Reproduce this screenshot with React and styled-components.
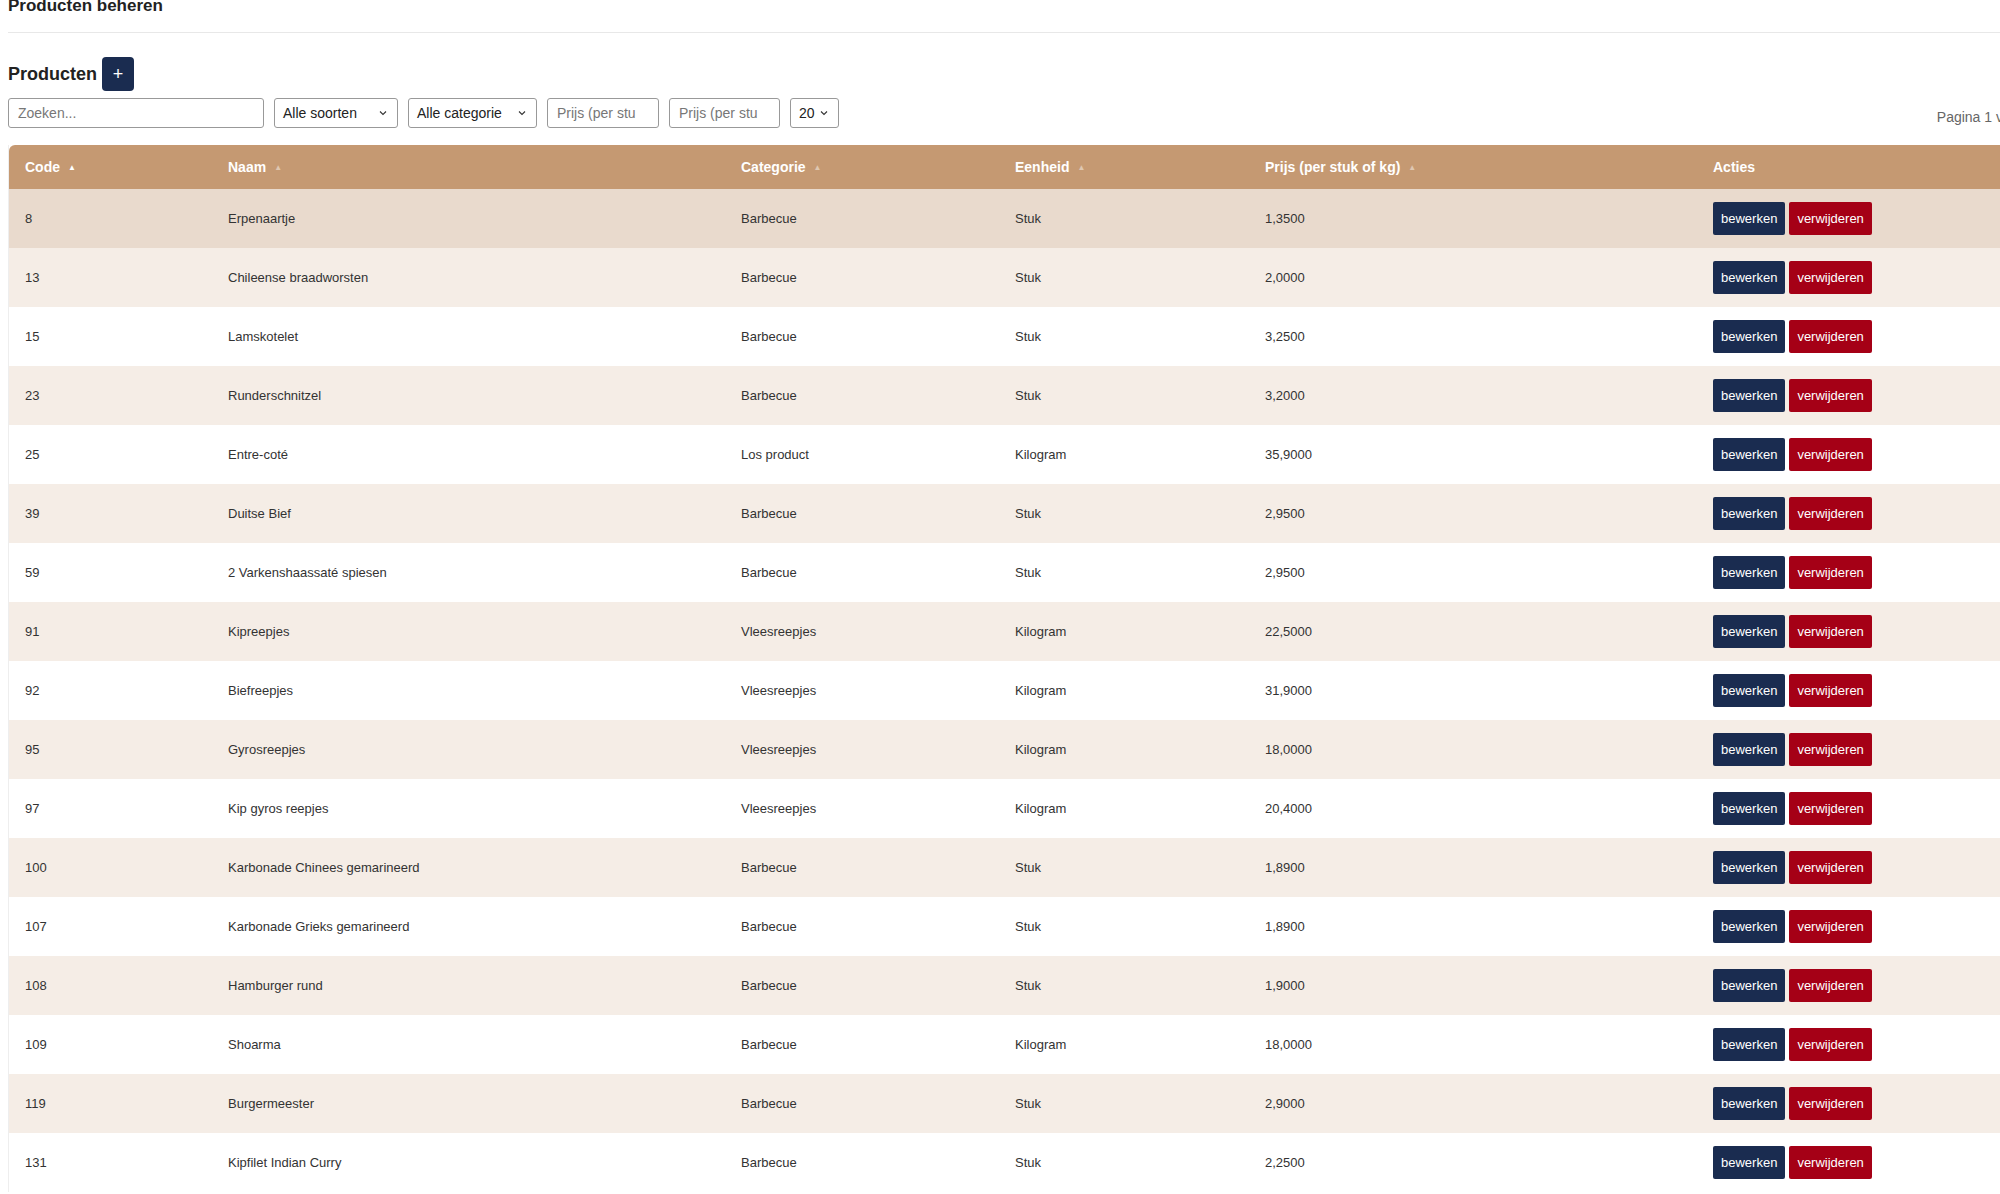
import styled, { createGlobalStyle } from "styled-components";

const GlobalStyle = createGlobalStyle`
  body {
    margin: 0;
    font-family: "Liberation Sans", Arial, sans-serif;
    color: #333;
    background: #fff;
    overflow: hidden;
  }
`;

const rows = [
  ["8", "Erpenaartje", "Barbecue", "Stuk", "1,3500"],
  ["13", "Chileense braadworsten", "Barbecue", "Stuk", "2,0000"],
  ["15", "Lamskotelet", "Barbecue", "Stuk", "3,2500"],
  ["23", "Runderschnitzel", "Barbecue", "Stuk", "3,2000"],
  ["25", "Entre-coté", "Los product", "Kilogram", "35,9000"],
  ["39", "Duitse Bief", "Barbecue", "Stuk", "2,9500"],
  ["59", "2 Varkenshaassaté spiesen", "Barbecue", "Stuk", "2,9500"],
  ["91", "Kipreepjes", "Vleesreepjes", "Kilogram", "22,5000"],
  ["92", "Biefreepjes", "Vleesreepjes", "Kilogram", "31,9000"],
  ["95", "Gyrosreepjes", "Vleesreepjes", "Kilogram", "18,0000"],
  ["97", "Kip gyros reepjes", "Vleesreepjes", "Kilogram", "20,4000"],
  ["100", "Karbonade Chinees gemarineerd", "Barbecue", "Stuk", "1,8900"],
  ["107", "Karbonade Grieks gemarineerd", "Barbecue", "Stuk", "1,8900"],
  ["108", "Hamburger rund", "Barbecue", "Stuk", "1,9000"],
  ["109", "Shoarma", "Barbecue", "Kilogram", "18,0000"],
  ["119", "Burgermeester", "Barbecue", "Stuk", "2,9000"],
  ["131", "Kipfilet Indian Curry", "Barbecue", "Stuk", "2,2500"],
];

const cols = "203px 513px 274px 250px 448px 420px";

const Page = styled.div`
  width: 2120px;
  padding: 0 0 0 8px;
`;

const Title = styled.h1`
  margin: -4px 0 0;
  font-size: 17px;
  font-weight: bold;
  color: #222;
  padding-bottom: 16px;
  border-bottom: 1px solid #e8e8e8;
`;

const HeadingRow = styled.div`
  display: flex;
  align-items: center;
  gap: 5px;
  margin-top: 24px;
`;

const Heading = styled.h2`
  margin: 0;
  font-size: 18px;
  font-weight: bold;
  color: #222;
`;

const PlusButton = styled.button`
  width: 32px;
  height: 34px;
  border: none;
  border-radius: 4px;
  background: #1a2c50;
  color: #fff;
  font-size: 18px;
  font-family: inherit;
`;

const Filters = styled.div`
  display: flex;
  align-items: center;
  gap: 10px;
  margin-top: 7px;
  height: 30px;
`;

const Input = styled.input`
  box-sizing: border-box;
  width: ${(p) => p.$w}px;
  height: 30px;
  border: 1px solid #999;
  border-radius: 3px;
  padding: 0 9px;
  font-size: 14px;
  font-family: inherit;
  &::placeholder { color: #777; }
`;

const Select = styled.div`
  box-sizing: border-box;
  width: ${(p) => p.$w}px;
  height: 30px;
  border: 1px solid #999;
  border-radius: 3px;
  padding: 0 8px;
  font-size: 14px;
  color: #222;
  display: flex;
  align-items: center;
  justify-content: space-between;
`;

const Pager = styled.div`
  margin-left: auto;
  margin-right: 90px;
  padding-top: 8px;
  font-size: 14px;
  color: #666;
  white-space: nowrap;
`;

const Table = styled.div`
  margin-top: 17px;
  border-left: 1px solid #eee;
`;

const HeadRow = styled.div`
  display: grid;
  grid-template-columns: ${cols};
  height: 44px;
  align-items: center;
  background: #c59972;
  border-top-left-radius: 6px;
`;

const HeadCell = styled.div`
  padding-left: 16px;
  color: #fff;
  font-size: 14px;
  font-weight: bold;
  display: flex;
  align-items: center;
  gap: 8px;
`;

const Arrow = styled.span`
  font-size: 8px;
  opacity: ${(p) => (p.$active ? 1 : 0.45)};
`;

const Row = styled.div`
  display: grid;
  grid-template-columns: ${cols};
  height: 59px;
  align-items: center;
  background: ${(p) => (p.$hover ? "#e9dacd" : p.$even ? "#f5ede6" : "#fff")};
`;

const Cell = styled.div`
  padding-left: 16px;
  font-size: 13px;
  color: #333;
`;

const Actions = styled.div`
  padding-left: 16px;
  display: flex;
  gap: 4px;
`;

const Btn = styled.button`
  height: 33px;
  padding: 0 8px;
  border: none;
  border-radius: 2px;
  color: #fff;
  font-size: 13px;
  font-family: inherit;
  background: ${(p) => (p.$danger ? "#a50016" : "#1a2c50")};
`;

const Chevron = () => (
  <svg width="12" height="12" viewBox="0 0 24 24" fill="none" stroke="#333" strokeWidth="2.2">
    <path d="M6 9l6 6 6-6" />
  </svg>
);

export default function App() {
  const heads = ["Code", "Naam", "Categorie", "Eenheid", "Prijs (per stuk of kg)"];
  return (
    <Page>
      <GlobalStyle />
      <Title>Producten beheren</Title>
      <HeadingRow>
        <Heading>Producten</Heading>
        <PlusButton>+</PlusButton>
      </HeadingRow>
      <Filters>
        <Input $w={256} placeholder="Zoeken..." />
        <Select $w={124}>Alle soorten <Chevron /></Select>
        <Select $w={129}>Alle categorie <Chevron /></Select>
        <Input $w={112} placeholder="Prijs (per stu" />
        <Input $w={111} placeholder="Prijs (per stu" />
        <Select $w={49}>20 <Chevron /></Select>
        <Pager>Pagina 1 van 12</Pager>
      </Filters>
      <Table>
        <HeadRow>
          {heads.map((h, i) => (
            <HeadCell key={h}>
              {h} <Arrow $active={i === 0}>▲</Arrow>
            </HeadCell>
          ))}
          <HeadCell>Acties</HeadCell>
        </HeadRow>
        {rows.map((r, i) => (
          <Row key={r[0]} $hover={i === 0} $even={i % 2 === 1}>
            {r.map((c, j) => (
              <Cell key={j}>{c}</Cell>
            ))}
            <Actions>
              <Btn>bewerken</Btn>
              <Btn $danger>verwijderen</Btn>
            </Actions>
          </Row>
        ))}
      </Table>
    </Page>
  );
}
